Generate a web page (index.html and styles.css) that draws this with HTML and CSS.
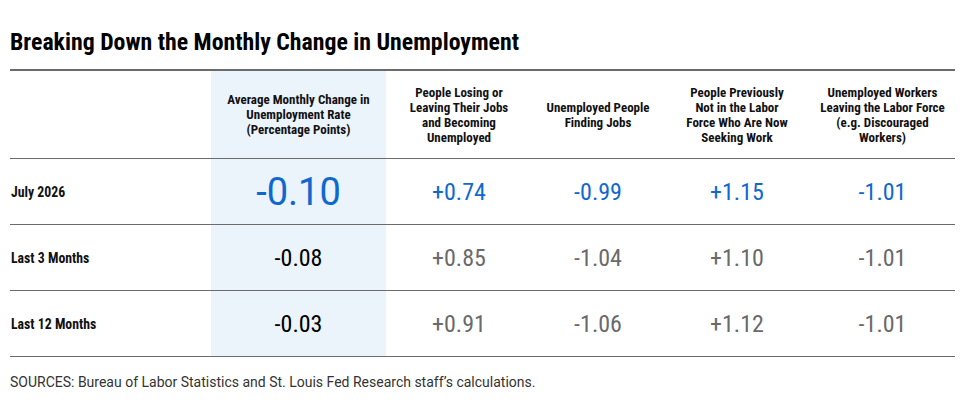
FILE: index.html
```html
<!DOCTYPE html>
<html lang="en">
<head>
<meta charset="utf-8">
<title>Breaking Down the Monthly Change in Unemployment</title>
<link rel="stylesheet" href="styles.css">
</head>
<body>
<div class="wrap">
  <h1 class="title">Breaking Down the Monthly Change in Unemployment</h1>
  <table class="tbl">
    <colgroup>
      <col class="c1"><col class="c2"><col class="c3"><col class="c4"><col class="c5"><col class="c6">
    </colgroup>
    <thead>
      <tr>
        <th class="lbl"></th>
        <th class="hl h2">Average Monthly Change in Unemployment Rate (Percentage Points)</th>
        <th class="h3">People Losing or Leaving Their Jobs and Becoming Unemployed</th>
        <th class="h4">Unemployed People Finding Jobs</th>
        <th class="h5">People Previously Not in the Labor Force Who Are Now Seeking Work</th>
        <th class="h6">Unemployed Workers Leaving the Labor Force (e.g. Discouraged Workers)</th>
      </tr>
    </thead>
    <tbody>
      <tr class="cur">
        <td class="lbl">July 2026</td>
        <td class="hl big">-0.10</td>
        <td>+0.74</td>
        <td>-0.99</td>
        <td>+1.15</td>
        <td>-1.01</td>
      </tr>
      <tr>
        <td class="lbl">Last 3 Months</td>
        <td class="hl">-0.08</td>
        <td>+0.85</td>
        <td>-1.04</td>
        <td>+1.10</td>
        <td>-1.01</td>
      </tr>
      <tr>
        <td class="lbl">Last 12 Months</td>
        <td class="hl">-0.03</td>
        <td>+0.91</td>
        <td>-1.06</td>
        <td>+1.12</td>
        <td>-1.01</td>
      </tr>
    </tbody>
  </table>
  <p class="src">SOURCES: Bureau of Labor Statistics and St. Louis Fed Research staff’s calculations.</p>
</div>
</body>
</html>
```

FILE: styles.css
```css
html, body {
  margin: 0;
  padding: 0;
  background: #fff;
}
body {
  font-family: Roboto, "Liberation Sans", sans-serif;
  color: #111;
}
.wrap {
  padding: 27px 7px 0 10px;
}
.title {
  margin: 0 0 12px 0;
  font-family: Roboto, sans-serif;
  font-stretch: 75%;
  font-weight: 700;
  font-size: 23.8px;
  line-height: 30px;
  color: #000;
}
.tbl {
  width: 945px;
  border-collapse: collapse;
  table-layout: fixed;
  border-top: 2px solid #6b6b6b;
}
.c1 { width: 201px; }
.c2 { width: 175px; }
.c3 { width: 146px; }
.c4 { width: 132px; }
.c5 { width: 146px; }
.c6 { width: 145px; }
.tbl th {
  height: 87px;
  padding: 0 6px;
  font-stretch: 75%;
  font-weight: 700;
  font-size: 13px;
  line-height: 15px;
  color: #111;
  text-align: center;
  vertical-align: middle;
  border-bottom: 1px solid #6b6b6b;
}
.tbl th.h2 { padding: 0 14px; }
.tbl th.h3 { padding: 0 19px; }
.tbl th.h4 { padding: 0 6px; }
.tbl th.h5 { padding: 0 18px; }
.tbl th.h6 { padding: 0 5px; }
.tbl td {
  height: 65px;
  padding: 0;
  text-align: center;
  vertical-align: middle;
  font-size: 24px;
  font-stretch: 87.5%;
  color: #6a6a6a;
  border-bottom: 1px solid #6b6b6b;
}
.tbl td.lbl {
  text-align: left;
  padding-left: 1px;
  font-size: 13.8px;
  font-weight: 700;
  font-stretch: 75%;
  color: #111;
}
.tbl .hl {
  background: #ebf3fb;
}
.tbl td.hl {
  color: #000;
}
.tbl tr.cur td {
  color: #1068cf;
}
.tbl tr.cur td.lbl {
  color: #111;
}
.tbl td.big {
  font-size: 38px;
  font-stretch: 91%;
  color: #1068cf;
}
.src {
  margin: 16px 0 0 0;
  font-size: 14px;
  line-height: 18px;
  color: #333;
}
```
